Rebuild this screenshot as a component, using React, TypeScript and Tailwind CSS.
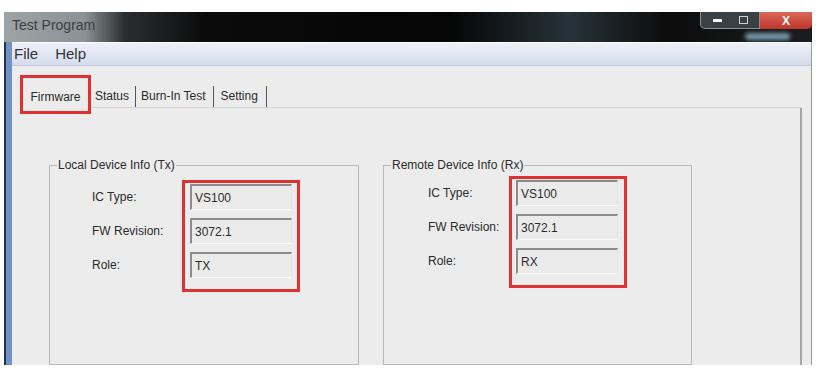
import React from 'react';

const rowsLocal = [
  { label: 'IC Type:', value: 'VS100' },
  { label: 'FW Revision:', value: '3072.1' },
  { label: 'Role:', value: 'TX' },
];

const rowsRemote = [
  { label: 'IC Type:', value: 'VS100' },
  { label: 'FW Revision:', value: '3072.1' },
  { label: 'Role:', value: 'RX' },
];

const InfoField: React.FC<{ value: string }> = ({ value }) => (
  <div className="h-[26px] w-[102px] flex items-center pl-[3px] bg-[#ebebeb] border-t-2 border-l-2 border-t-[#8c8c8c] border-l-[#8c8c8c] border-r border-b border-r-[#e4e4e4] border-b-[#fafafa] text-[12px] text-[#2b2b2b]">
    {value}
  </div>
);

interface GroupProps {
  title: string;
  rows: { label: string; value: string }[];
  width: string;
  padTop: string;
  padLeft: string;
  labelWidth: string;
  fieldPad: string;
}

const DeviceGroup: React.FC<GroupProps> = ({ title, rows, width, padTop, padLeft, labelWidth, fieldPad }) => (
  <div className={`relative h-[200px] border border-[#b8b8b8] ${width} ${padTop} ${padLeft} flex`}>
    <span className="absolute -top-[9px] left-[7px] bg-[#ececec] px-[1px] text-[12px] leading-[16px] text-[#2b2b2b]">
      {title}
    </span>
    <div className={`${labelWidth} flex flex-col gap-[8px] pt-[4px]`}>
      {rows.map((r) => (
        <div key={r.label} className="h-[26px] flex items-center text-[12px] text-[#2b2b2b]">
          {r.label}
        </div>
      ))}
    </div>
    <div className={`self-start w-[118px] border-[3px] border-[#e0302f] ${fieldPad} pt-[1px] pb-[11px] flex flex-col gap-[8px]`}>
      {rows.map((r) => (
        <InfoField key={r.label} value={r.value} />
      ))}
    </div>
  </div>
);

export default function App() {
  return (
    <div className="w-[823px] h-[377px] bg-white overflow-hidden font-['Liberation_Sans',Arial,sans-serif]">
      <div className="ml-[4px] mt-[12px] w-[808px] h-[353px] flex flex-col overflow-hidden">
        {/* title bar */}
        <div className="relative h-[30px] flex items-center bg-[linear-gradient(90deg,#9ea3a6_0%,#8b9194_10%,#2a2d30_15%,#0b0b0b_25%,#050505_55%,#27323a_70%,#0c0c0c_82%,#1b1d1f_100%)]">
          <span className="ml-[8px] -mt-[4px] text-[14px] text-[#3a3f44]">Test Program</span>
          <div className="absolute right-[52px] top-0 h-[17px] w-[60px] flex items-center rounded-bl-[5px] border border-t-0 border-[#8a8f94] bg-[#3b4045]">
            <span className="ml-[12px] w-[9px] h-[3px] bg-white" />
            <span className="ml-[17px] w-[9px] h-[8px] border border-[#d0d0d0]" />
          </div>
          <div className="absolute right-0 top-0 h-[17px] w-[52px] flex items-center justify-center rounded-br-[5px] bg-[linear-gradient(180deg,#d9695a,#c1352a)] text-white text-[12px] font-bold">
            X
          </div>
          <div className="absolute right-[22px] bottom-[2px] h-[7px] w-[45px] rounded-full bg-[#9fd0e6] opacity-70 blur-[2px]" />
        </div>

        <div className="flex flex-1 min-h-0">
          {/* left window frame */}
          <div className="w-[8px] border-l-2 border-[#24344e] bg-[#7391c2]" />

          <div className="flex-1 flex flex-col min-w-0 border-r border-[#9a9a9a]">
            {/* menu bar */}
            <div className="h-[24px] flex items-center gap-[17px] pl-[2px] border-t border-white bg-[linear-gradient(180deg,#eef0f8,#d6dcee)] border-b border-b-[#c3c9dc] text-[15px] text-[#333]">
              <span>File</span>
              <span>Help</span>
            </div>

            {/* content */}
            <div className="flex-1 bg-[#ececec] flex flex-col pl-[2px] pr-[9px]">
              {/* tabs */}
              <div className="mt-[9px] flex items-end h-[33px] pl-[6px] text-[12px] text-[#2b2b2b]">
                <div className="h-[39px] w-[71px] border-[3px] border-[#e0302f] flex items-center justify-center pt-[5px] self-end -mb-[6px] relative z-10">
                  Firmware
                </div>
                <div className="flex items-center h-[28px] pt-[6px] flex-1 border-b border-[#d6d6d6]">
                  <span className="pl-[4px] pr-[6px] border-r border-[#555] leading-[21px]">Status</span>
                  <span className="pl-[5px] pr-[7px] border-r border-[#555] leading-[21px]">Burn-In Test</span>
                  <span className="pl-[7px] pr-[8px] border-r border-[#555] leading-[21px]">Setting</span>
                </div>
              </div>

              {/* tab panel */}
              <div className="flex-1 border-r-2 border-[#a6a6a6] flex gap-[24px] pl-[35px] pt-[57px]">
                <DeviceGroup
                  title="Local Device Info (Tx)"
                  rows={rowsLocal}
                  width="w-[310px]"
                  padTop="pt-[14px]"
                  padLeft="pl-[42px]"
                  labelWidth="w-[90px]"
                  fieldPad="pl-[5px]"
                />
                <DeviceGroup
                  title="Remote Device Info (Rx)"
                  rows={rowsRemote}
                  width="w-[309px]"
                  padTop="pt-[10px]"
                  padLeft="pl-[44px]"
                  labelWidth="w-[81px]"
                  fieldPad="pl-[4px]"
                />
              </div>
            </div>
          </div>
        </div>
      </div>
    </div>
  );
}
